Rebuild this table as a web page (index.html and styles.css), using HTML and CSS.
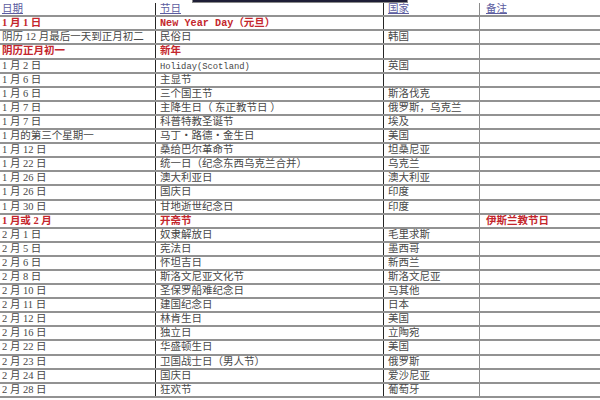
FILE: index.html
```html
<!DOCTYPE html>
<html lang="zh-CN">
<head>
<meta charset="utf-8">
<title>节日表</title>
<link rel="stylesheet" href="styles.css">
</head>
<body>
<div class="sheet">
  <div class="topbar"></div>
  <div class="row head">
    <div class="c c1"><a>日期</a></div>
    <div class="c c2"><a>节日</a></div>
    <div class="c c3"><a>国家</a></div>
    <div class="c c4"><a>备注</a></div>
  </div>
  <div class="row red">
    <div class="c c1">1 月 1 日</div>
    <div class="c c2"><span class="mono">New Year Day</span>（元旦）</div>
    <div class="c c3"></div>
    <div class="c c4"></div>
  </div>
  <div class="row">
    <div class="c c1">阴历 12 月最后一天到正月初二</div>
    <div class="c c2">民俗日</div>
    <div class="c c3">韩国</div>
    <div class="c c4"></div>
  </div>
  <div class="row red">
    <div class="c c1">阴历正月初一</div>
    <div class="c c2">新年</div>
    <div class="c c3"></div>
    <div class="c c4"></div>
  </div>
  <div class="row">
    <div class="c c1">1 月 2 日</div>
    <div class="c c2"><span class="mono small">Holiday(Scotland)</span></div>
    <div class="c c3">英国</div>
    <div class="c c4"></div>
  </div>
  <div class="row">
    <div class="c c1">1 月 6 日</div>
    <div class="c c2">主显节</div>
    <div class="c c3"></div>
    <div class="c c4"></div>
  </div>
  <div class="row">
    <div class="c c1">1 月 6 日</div>
    <div class="c c2">三个国王节</div>
    <div class="c c3">斯洛伐克</div>
    <div class="c c4"></div>
  </div>
  <div class="row">
    <div class="c c1">1 月 7 日</div>
    <div class="c c2">主降生日（ 东正教节日 ）</div>
    <div class="c c3">俄罗斯，乌克兰</div>
    <div class="c c4"></div>
  </div>
  <div class="row">
    <div class="c c1">1 月 7 日</div>
    <div class="c c2">科普特教圣诞节</div>
    <div class="c c3">埃及</div>
    <div class="c c4"></div>
  </div>
  <div class="row">
    <div class="c c1">1 月的第三个星期一</div>
    <div class="c c2">马丁・路德・金生日</div>
    <div class="c c3">美国</div>
    <div class="c c4"></div>
  </div>
  <div class="row">
    <div class="c c1">1 月 12 日</div>
    <div class="c c2">桑给巴尔革命节</div>
    <div class="c c3">坦桑尼亚</div>
    <div class="c c4"></div>
  </div>
  <div class="row">
    <div class="c c1">1 月 22 日</div>
    <div class="c c2">统一日（纪念东西乌克兰合并）</div>
    <div class="c c3">乌克兰</div>
    <div class="c c4"></div>
  </div>
  <div class="row">
    <div class="c c1">1 月 26 日</div>
    <div class="c c2">澳大利亚日</div>
    <div class="c c3">澳大利亚</div>
    <div class="c c4"></div>
  </div>
  <div class="row">
    <div class="c c1">1 月 26 日</div>
    <div class="c c2">国庆日</div>
    <div class="c c3">印度</div>
    <div class="c c4"></div>
  </div>
  <div class="row">
    <div class="c c1">1 月 30 日</div>
    <div class="c c2">甘地逝世纪念日</div>
    <div class="c c3">印度</div>
    <div class="c c4"></div>
  </div>
  <div class="row red">
    <div class="c c1">1 月或 2 月</div>
    <div class="c c2">开斋节</div>
    <div class="c c3"></div>
    <div class="c c4">伊斯兰教节日</div>
  </div>
  <div class="row">
    <div class="c c1">2 月 1 日</div>
    <div class="c c2">奴隶解放日</div>
    <div class="c c3">毛里求斯</div>
    <div class="c c4"></div>
  </div>
  <div class="row">
    <div class="c c1">2 月 5 日</div>
    <div class="c c2">宪法日</div>
    <div class="c c3">墨西哥</div>
    <div class="c c4"></div>
  </div>
  <div class="row">
    <div class="c c1">2 月 6 日</div>
    <div class="c c2">怀坦吉日</div>
    <div class="c c3">新西兰</div>
    <div class="c c4"></div>
  </div>
  <div class="row">
    <div class="c c1">2 月 8 日</div>
    <div class="c c2">斯洛文尼亚文化节</div>
    <div class="c c3">斯洛文尼亚</div>
    <div class="c c4"></div>
  </div>
  <div class="row">
    <div class="c c1">2 月 10 日</div>
    <div class="c c2">圣保罗船难纪念日</div>
    <div class="c c3">马其他</div>
    <div class="c c4"></div>
  </div>
  <div class="row">
    <div class="c c1">2 月 11 日</div>
    <div class="c c2">建国纪念日</div>
    <div class="c c3">日本</div>
    <div class="c c4"></div>
  </div>
  <div class="row">
    <div class="c c1">2 月 12 日</div>
    <div class="c c2">林肯生日</div>
    <div class="c c3">美国</div>
    <div class="c c4"></div>
  </div>
  <div class="row">
    <div class="c c1">2 月 16 日</div>
    <div class="c c2">独立日</div>
    <div class="c c3">立陶宛</div>
    <div class="c c4"></div>
  </div>
  <div class="row">
    <div class="c c1">2 月 22 日</div>
    <div class="c c2">华盛顿生日</div>
    <div class="c c3">美国</div>
    <div class="c c4"></div>
  </div>
  <div class="row">
    <div class="c c1">2 月 23 日</div>
    <div class="c c2">卫国战士日（男人节）</div>
    <div class="c c3">俄罗斯</div>
    <div class="c c4"></div>
  </div>
  <div class="row">
    <div class="c c1">2 月 24 日</div>
    <div class="c c2">国庆日</div>
    <div class="c c3">爱沙尼亚</div>
    <div class="c c4"></div>
  </div>
  <div class="row">
    <div class="c c1">2 月 28 日</div>
    <div class="c c2">狂欢节</div>
    <div class="c c3">葡萄牙</div>
    <div class="c c4"></div>
  </div>
</div>
</body>
</html>
```

FILE: styles.css
```css
html, body {
  margin: 0;
  padding: 0;
  background: #ffffff;
}

body {
  font-family: "Liberation Serif", "Noto Sans CJK SC", serif;
  font-size: 10.5px;
  color: #474747;
}

.sheet {
  position: relative;
  width: 600px;
  height: 400px;
  overflow: hidden;
}

.topbar {
  position: absolute;
  left: 192px;
  top: 0;
  width: 214px;
  height: 2px;
  background: #1e1e36;
  border: 1px solid #8a8a8a;
  border-top: none;
}

.row {
  display: grid;
  grid-template-columns: 156px 228px 96px 1fr;
  height: 14.1px;
  box-sizing: border-box;
  border-bottom: 2px solid #929292;
}

.row.head {
  height: 17.3px;
  padding-top: 3px;
}

.c {
  line-height: 12px;
  white-space: nowrap;
  overflow: hidden;
}

.c1 {
  padding-left: 2px;
  border-right: 1px solid #262626;
}

.c2 {
  padding-left: 4px;
  border-right: 1px solid #262626;
}

.c3 {
  padding-left: 4px;
  border-right: 1px solid #8c8c8c;
}

.c4 {
  padding-left: 6px;
}

.head a {
  color: #5c5ca0;
  text-decoration: underline;
}

.red .c {
  color: #c4262c;
  font-weight: bold;
}

.mono {
  font-family: "Liberation Mono", "Noto Sans CJK SC", monospace;
  font-size: 10.2px;
}

.mono.small {
  font-size: 8.8px;
}
```
